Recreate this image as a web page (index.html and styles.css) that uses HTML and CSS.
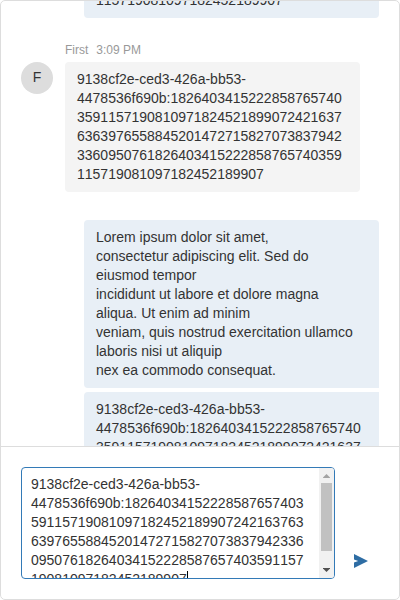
FILE: index.html
```html
<!DOCTYPE html>
<html lang="en">
<head>
<meta charset="utf-8">
<title>Chat</title>
<link rel="stylesheet" href="styles.css">
</head>
<body>
<main class="chat">
  <section class="messages">
    <div class="bubble own first">9138cf2e-ced3-426a-bb53-<br>4478536f690b:1826403415222858765740<br>3591157190810971824521899072421637<br>6363976558845201472715827073837942<br>3360950761826403415222858765740359<br>115719081097182452189907</div>
    <div class="group">
      <div class="avatar">F</div>
      <div class="content">
        <div class="meta"><span>First</span><span>3:09 PM</span></div>
        <div class="bubble">9138cf2e-ced3-426a-bb53-<br>4478536f690b:1826403415222858765740<br>3591157190810971824521899072421637<br>6363976558845201472715827073837942<br>3360950761826403415222858765740359<br>115719081097182452189907</div>
      </div>
    </div>
    <div class="bubble own followed">Lorem ipsum dolor sit amet,<br>consectetur adipiscing elit. Sed do<br>eiusmod tempor<br>incididunt ut labore et dolore magna<br>aliqua. Ut enim ad minim<br>veniam, quis nostrud exercitation ullamco<br>laboris nisi ut aliquip<br>nex ea commodo consequat.</div>
    <div class="bubble own next">9138cf2e-ced3-426a-bb53-<br>4478536f690b:1826403415222858765740<br>3591157190810971824521899072421637<br>6363976558845201472715827073837942<br>3360950761826403415222858765740359<br>115719081097182452189907</div>
  </section>
  <footer class="composer">
    <div class="input">
      <div class="text">9138cf2e-ced3-426a-bb53-<br>4478536f690b:18264034152228587657403<br>59115719081097182452189907242163763<br>63976558845201472715827073837942336<br>09507618264034152228587657403591157<br>19081097182452189907<span class="caret"></span></div>
      <div class="scrollbar">
        <svg class="arrow up" width="7" height="4" viewBox="0 0 7 4"><path d="M3.5 0 7 3.5V4H0V3.5z"/></svg>
        <div class="thumb"></div>
        <svg class="arrow down" width="7" height="4" viewBox="0 0 7 4"><path d="M3.5 4 7 .5V0H0V.5z"/></svg>
      </div>
    </div>
    <svg class="send" width="14" height="14" viewBox="0 0 14 14"><path d="M0 0 14 7 0 14V8.5L4.2 7 0 5.5z"/></svg>
  </footer>
</main>
</body>
</html>
```
FILE: styles.css
```css
* { box-sizing: border-box; }
body {
  margin: 0;
  background: #fff;
  color: #333;
  font: 14px/19px "Liberation Sans", Arial, sans-serif;
  font-kerning: none;
}
.chat {
  display: flex;
  flex-direction: column;
  height: 600px;
  border: 1px solid #ddd;
  border-radius: 5px;
  overflow: hidden;
}
.messages {
  flex: 1;
  min-height: 0;
  overflow: hidden;
  padding: 0 20px;
}
.bubble {
  width: 295px;
  height: max-content;
  padding: 8px 12px;
  border-radius: 4px;
  background: #f4f4f4;
  white-space: nowrap;
}
.own {
  margin-left: auto;
  background: #e8eff6;
}
.first { margin-top: -113px; }
.followed { border-bottom-right-radius: 0; }
.next {
  margin-top: 4px;
  border-top-right-radius: 0;
}
.group {
  display: flex;
  gap: 12px;
  margin: 22px 0 28px;
}
.avatar {
  width: 32px;
  height: 32px;
  margin-top: 22px;
  border-radius: 50%;
  background: #ddd;
  line-height: 31px;
  text-align: center;
}
.meta {
  display: flex;
  gap: 8px;
  height: 22px;
  color: #999;
  font-size: 12px;
  line-height: 20px;
}
.composer {
  display: flex;
  flex: none;
  height: 153px;
  padding: 20px;
  border-top: 1px solid #ddd;
}
.input {
  display: flex;
  width: 314px;
  height: 112px;
  border: 1px solid #337ab7;
  border-radius: 4px;
  overflow: hidden;
}
.text {
  flex: 1;
  padding: 7px 9px;
  white-space: nowrap;
}
.caret {
  display: inline-block;
  width: 1px;
  height: 16px;
  background: #000;
  vertical-align: -3px;
}
.scrollbar {
  display: flex;
  flex-direction: column;
  align-items: center;
  width: 15px;
  padding: 6px 0;
  background: #f1f1f1;
}
.thumb {
  width: 11px;
  height: 68px;
  margin: 5px 0 17px;
  background: #c1c1c1;
}
.arrow { flex: none; }
.up { fill: #a3a3a3; }
.down { fill: #505050; }
.send {
  margin: 87px 0 0 19px;
  fill: #2e6da4;
}
```
